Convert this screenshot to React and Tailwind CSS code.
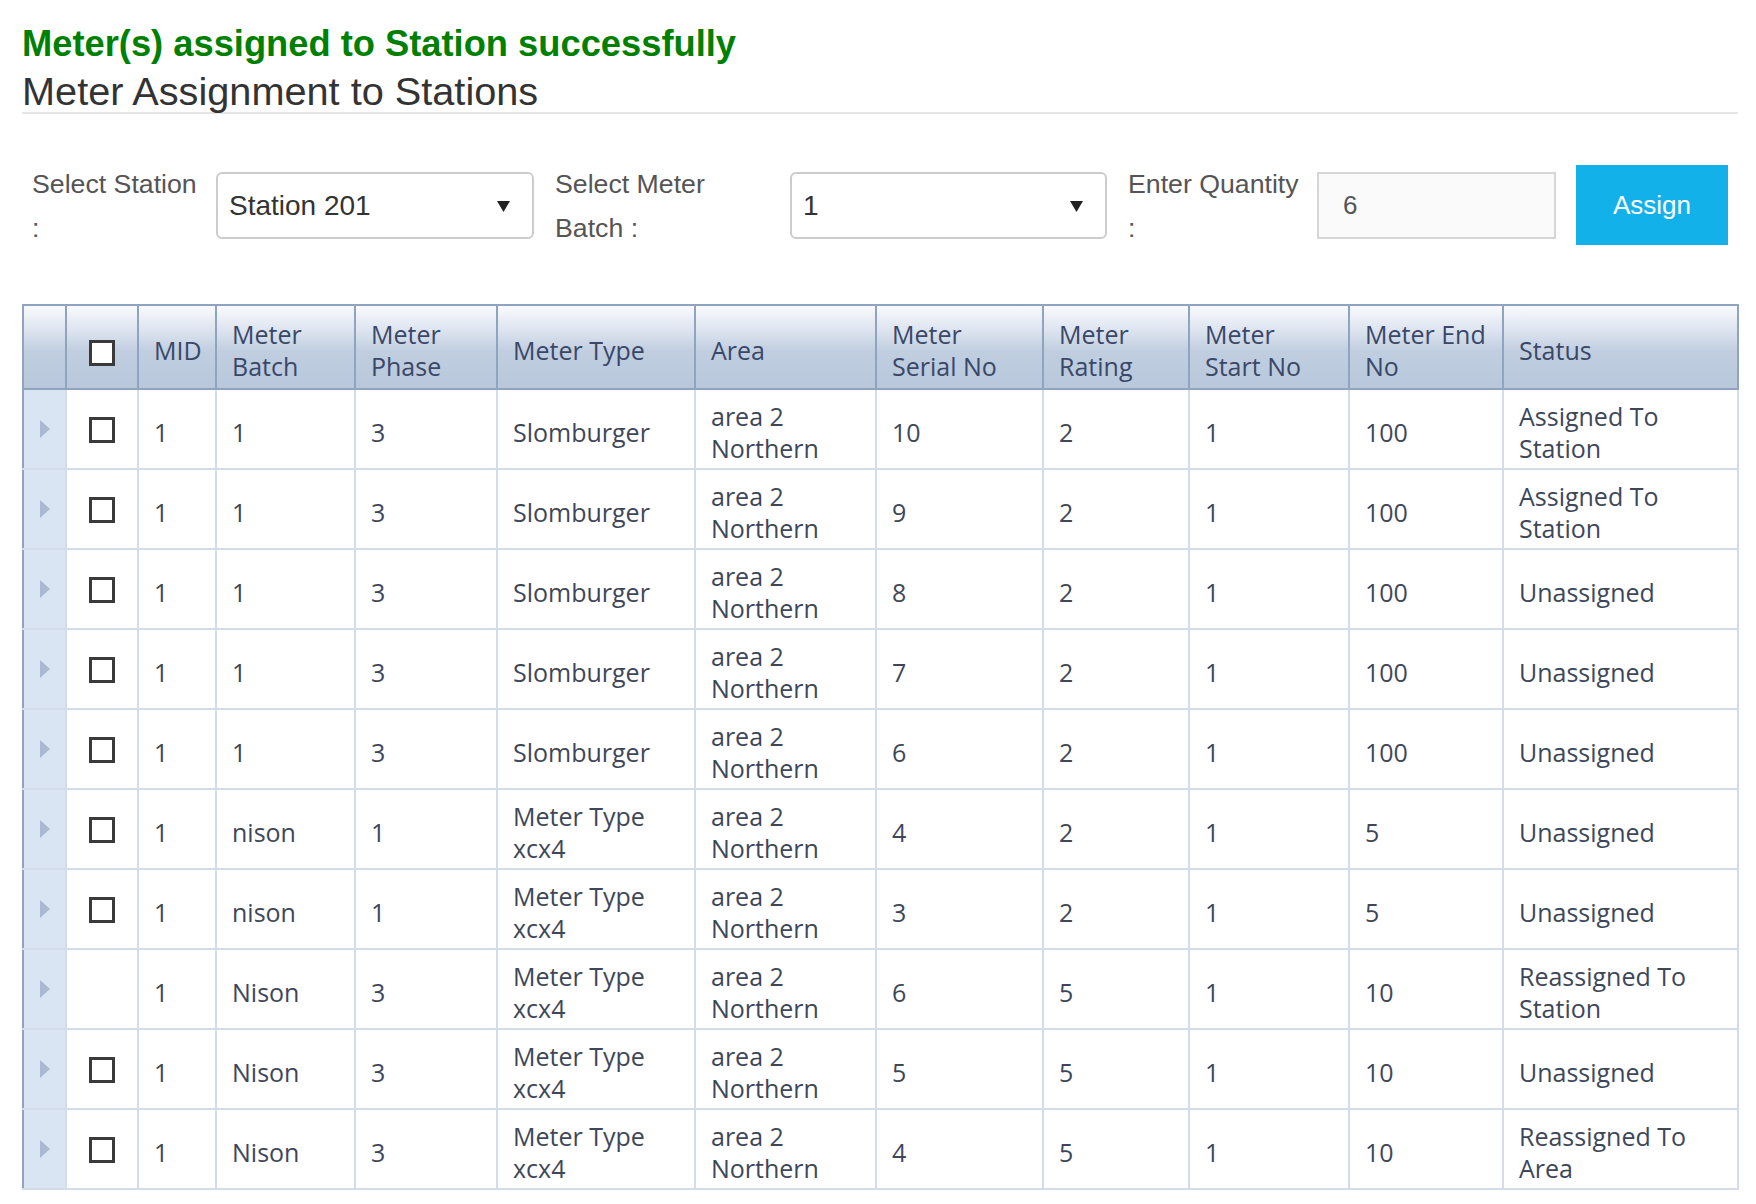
import React from "react";

const AREA = ["area 2", "Northern"];
const SLOM = ["Slomburger"];
const XCX = ["Meter Type", "xcx4"];

const rows = [
  { cb: true, batch: "1", phase: "3", type: SLOM, serial: "10", rating: "2", end: "100", status: ["Assigned To", "Station"] },
  { cb: true, batch: "1", phase: "3", type: SLOM, serial: "9", rating: "2", end: "100", status: ["Assigned To", "Station"] },
  { cb: true, batch: "1", phase: "3", type: SLOM, serial: "8", rating: "2", end: "100", status: ["Unassigned"] },
  { cb: true, batch: "1", phase: "3", type: SLOM, serial: "7", rating: "2", end: "100", status: ["Unassigned"] },
  { cb: true, batch: "1", phase: "3", type: SLOM, serial: "6", rating: "2", end: "100", status: ["Unassigned"] },
  { cb: true, batch: "nison", phase: "1", type: XCX, serial: "4", rating: "2", end: "5", status: ["Unassigned"] },
  { cb: true, batch: "nison", phase: "1", type: XCX, serial: "3", rating: "2", end: "5", status: ["Unassigned"] },
  { cb: false, batch: "Nison", phase: "3", type: XCX, serial: "6", rating: "5", end: "10", status: ["Reassigned To", "Station"] },
  { cb: true, batch: "Nison", phase: "3", type: XCX, serial: "5", rating: "5", end: "10", status: ["Unassigned"] },
  { cb: true, batch: "Nison", phase: "3", type: XCX, serial: "4", rating: "5", end: "10", status: ["Reassigned To", "Area"] },
];

const headers = [
  { w: "w-[72px]", lines: null },
  { w: "w-[78px]", lines: ["MID"] },
  { w: "w-[139px]", lines: ["Meter", "Batch"] },
  { w: "w-[142px]", lines: ["Meter", "Phase"] },
  { w: "w-[198px]", lines: ["Meter Type"] },
  { w: "w-[181px]", lines: ["Area"] },
  { w: "w-[167px]", lines: ["Meter", "Serial No"] },
  { w: "w-[146px]", lines: ["Meter", "Rating"] },
  { w: "w-[160px]", lines: ["Meter", "Start No"] },
  { w: "w-[154px]", lines: ["Meter End", "No"] },
  { w: "w-[235px]", lines: ["Status"] },
];

const Lines = ({ lines }) => (
  <>
    {lines.map((l, i) => (
      <div key={i} className="whitespace-nowrap">
        {l}
      </div>
    ))}
  </>
);

const Box = () => (
  <div className="mx-auto h-[26px] w-[26px] border-[3px] border-[#3a3a3a] bg-white" />
);

const Caret = () => (
  <svg width="13" height="12" viewBox="0 0 13 12" className="shrink-0">
    <polygon points="0,1 13,1 6.5,12" fill="#222" />
  </svg>
);

const Select = ({ value, width }) => (
  <div
    className={`mt-[10px] flex h-[67px] ${width} shrink-0 items-center justify-between rounded-[6px] border-2 border-[#cccccc] bg-white pl-[11px] pr-[22px] text-[28px] text-[#333]`}
  >
    <span>{value}</span>
    <Caret />
  </div>
);

const Label = ({ first, second }) => (
  <div className="text-[26.7px] leading-[44px] text-[#555]">
    <div className="whitespace-nowrap">{first}</div>
    <div>{second}</div>
  </div>
);

export default function App() {
  const td = "border-2 border-[#d4dce9] pl-[15px] pt-[5px] align-middle";
  return (
    <div className="min-h-screen bg-white font-['Liberation_Sans',Arial,sans-serif]">
      <div className="ml-[22px] w-[1716px] pt-[24px]">
        <div className="text-[36.3px] font-bold leading-[40px] text-[#008000]">
          Meter(s) assigned to Station successfully
        </div>
        <h1 className="mt-[6px] text-[39.7px] leading-[42px] text-[#333]">
          Meter Assignment to Stations
        </h1>
        <div className="h-[2px] bg-[#e6e6e6]" />

        <div className="mt-[48px] flex items-start">
          <div className="w-[194px] shrink-0 pl-[10px]">
            <Label first="Select Station" second=":" />
          </div>
          <Select value="Station 201" width="w-[318px]" />
          <div className="w-[256px] shrink-0 pl-[21px]">
            <Label first="Select Meter" second="Batch :" />
          </div>
          <Select value="1" width="w-[317px]" />
          <div className="w-[210px] shrink-0 pl-[21px]">
            <Label first="Enter Quantity" second=":" />
          </div>
          <div className="mt-[10px] flex h-[67px] w-[239px] shrink-0 items-center border-2 border-[#d6d6d6] bg-[#fafafa] pl-[24px] text-[26px] text-[#555]">
            6
          </div>
          <button className="ml-[20px] mt-[3px] h-[80px] w-[152px] shrink-0 bg-[#13b1ea] text-[26px] text-white">
            Assign
          </button>
        </div>

        <table className="mt-[54px] w-[1716px] table-fixed border-collapse border-2 border-[#8fa4c1] font-['Open_Sans',sans-serif] text-[25px] leading-[32px]">
          <thead>
            <tr className="h-[84px] bg-[linear-gradient(to_bottom,#fafbfd_0%,#dde4ef_30%,#c0cee0_55%,#b8c7db_100%)] text-left font-normal text-[#3a4868]">
              <th className="w-[43px] border-2 border-[#8fa4c1]" />
              {headers.map((h, i) =>
                h.lines ? (
                  <th
                    key={i}
                    className={`${h.w} border-2 border-[#8fa4c1] pl-[15px] pt-[6px] align-middle font-normal`}
                  >
                    <Lines lines={h.lines} />
                  </th>
                ) : (
                  <th key={i} className={`${h.w} border-2 border-[#8fa4c1] pt-[12px] align-middle`}>
                    <Box />
                  </th>
                )
              )}
            </tr>
          </thead>
          <tbody className="text-[#3e4759]">
            {rows.map((r, i) => (
              <tr key={i} className="h-[80px]">
                <td className="border-2 border-[#d4dce9] border-l-[#8fa4c1] bg-[#d9e5f3] align-middle">
                  <svg width="10" height="18" viewBox="0 0 10 18" className="mx-auto block">
                    <polygon points="0,0 10,9 0,18" fill="#a9b9d2" />
                  </svg>
                </td>
                <td className="border-2 border-[#d4dce9] pt-[2px] align-middle">{r.cb ? <Box /> : null}</td>
                <td className={td}>1</td>
                <td className={td}>{r.batch}</td>
                <td className={td}>{r.phase}</td>
                <td className={td}><Lines lines={r.type} /></td>
                <td className={td}><Lines lines={AREA} /></td>
                <td className={td}>{r.serial}</td>
                <td className={td}>{r.rating}</td>
                <td className={td}>1</td>
                <td className={td}>{r.end}</td>
                <td className={td}><Lines lines={r.status} /></td>
              </tr>
            ))}
          </tbody>
        </table>
      </div>
    </div>
  );
}
